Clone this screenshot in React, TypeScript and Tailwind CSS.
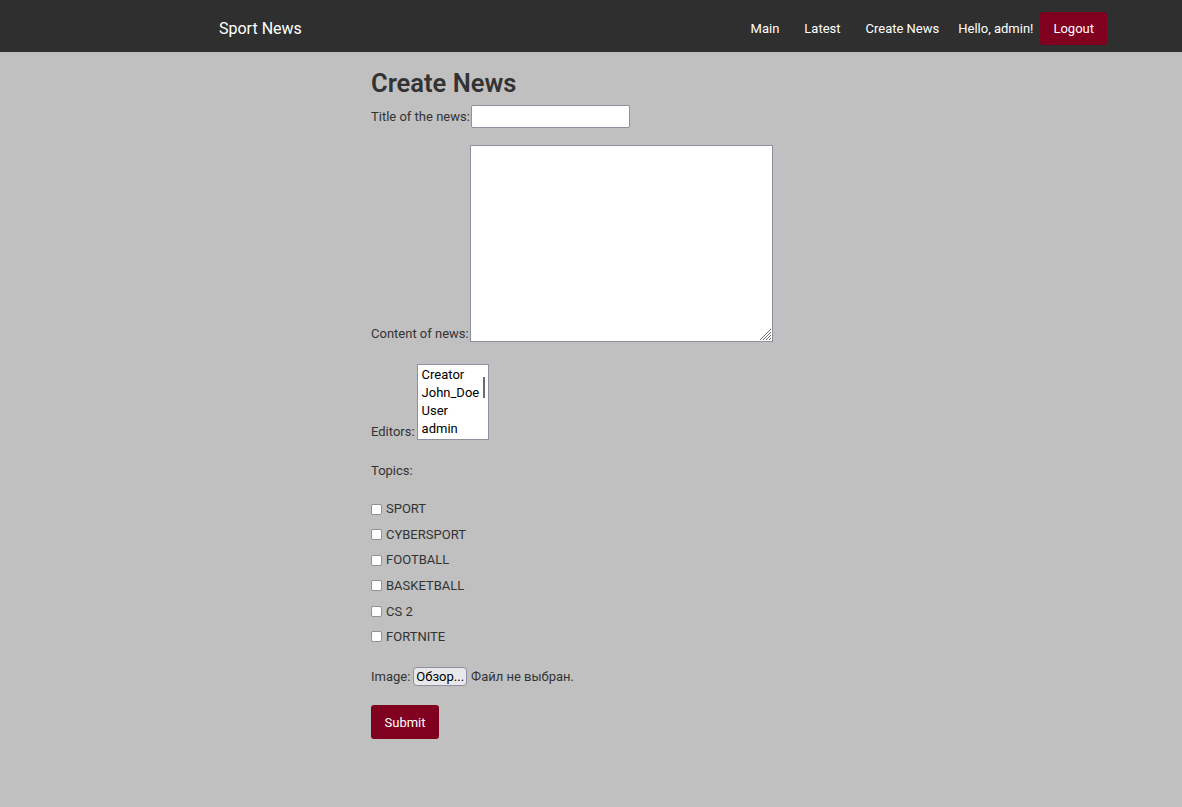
const editors = ['Creator', 'John_Doe', 'User', 'admin'];
const topics = ['SPORT', 'CYBERSPORT', 'FOOTBALL', 'BASKETBALL', 'CS 2', 'FORTNITE'];

function NavBar() {
  return (
    <header className="h-[52px] bg-[#2f2f2f] text-white">
      <div className="flex h-full items-center pl-[219px] pr-[75px] pt-[5px]">
        <a className="text-[16px]">Sport News</a>
        <nav className="ml-auto flex items-center text-[13px]">
          <a className="mr-[25px]">Main</a>
          <a className="mr-[25px]">Latest</a>
          <a className="mr-[19px]">Create News</a>
          <span className="mr-[7px]">Hello, admin!</span>
          <button className="h-[33px] rounded-[3px] bg-[#800020] px-[13px] text-white">Logout</button>
        </nav>
      </div>
    </header>
  );
}

function Grip() {
  return (
    <svg className="absolute bottom-[1px] right-[1px]" width="14" height="14" viewBox="0 0 14 14">
      <path d="M13 2 L2 13 M13 5 L5 13 M13 8 L8 13 M13 11 L11 13" stroke="#6b6b6b" strokeWidth="1" />
    </svg>
  );
}

export default function App() {
  return (
    <div className="min-h-[807px] bg-[#c0c0c0] text-[#333] text-[13px]" style={{ fontFamily: 'Roboto, "Liberation Sans", sans-serif' }}>
      <NavBar />
      <main className="mx-auto w-[440px] pt-[15px]">
        <h1 className="text-[25.5px] font-semibold leading-[32px]">Create News</h1>

        <div className="mt-[6px] flex items-center gap-[1px]">
          <label>Title of the news:</label>
          <input type="text" className="h-[23px] w-[159px] rounded-[2px] border border-[#8f8f9d] bg-white px-1 outline-none" />
        </div>

        <div className="mt-[17px] flex items-end gap-[1px]">
          <label className="leading-[16px]">Content of news:</label>
          <div className="relative">
            <textarea className="block h-[197px] w-[303px] resize-none border border-[#8f8f9d] bg-white outline-none" />
            <Grip />
          </div>
        </div>

        <div className="mt-[22px] flex items-end gap-[2px]">
          <label className="leading-[16px]">Editors:</label>
          <div className="relative h-[76px] w-[72px] border border-[#8f8f9d] bg-white pt-[1px] text-black">
            {editors.map((e) => (
              <div key={e} className="pl-[4px] leading-[18px]">{e}</div>
            ))}
            <div className="absolute right-[3px] top-[12px] h-[21px] w-[2px] bg-[#6b6b6b]" />
          </div>
        </div>

        <p className="mt-[23px] leading-[16px]">Topics:</p>

        <div className="mt-[22px] flex flex-col gap-[9.6px]">
          {topics.map((t) => (
            <label key={t} className="flex h-[16px] items-center gap-[4px]">
              <span className="inline-block h-[11px] w-[11px] rounded-[2px] border border-[#8f8f9d] bg-white" />
              <span>{t}</span>
            </label>
          ))}
        </div>

        <div className="mt-[22px] flex items-center">
          <span>Image:</span>
          <span className="ml-[3px] h-[19px] rounded-[4px] border border-[#8f8f9d] bg-[#e9e9ed] px-[2px] leading-[17px] text-black">Обзор...</span>
          <span className="ml-[4px]">Файл не выбран.</span>
        </div>

        <button className="mt-[19px] h-[34px] w-[68px] rounded-[3px] bg-[#800020] text-white">Submit</button>
      </main>
    </div>
  );
}
